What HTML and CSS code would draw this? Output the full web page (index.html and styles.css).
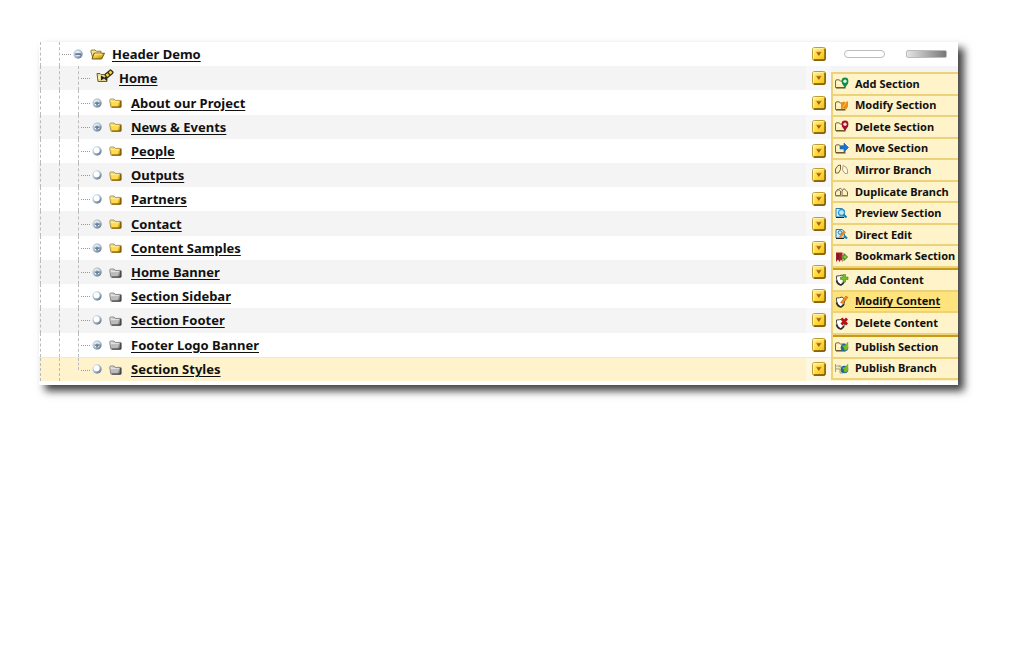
FILE: index.html
```html
<!DOCTYPE html>
<html lang="en">
<head>
<meta charset="utf-8">
<title>Site Structure</title>
<link rel="stylesheet" href="styles.css">
</head>
<body>
<svg class="defs" aria-hidden="true">
  <defs>
    <linearGradient id="gold" x1="0" y1="0" x2="1" y2="1"><stop offset="0" stop-color="#fff3a0"/><stop offset=".5" stop-color="#efc02a"/><stop offset="1" stop-color="#a97500"/></linearGradient>
    <linearGradient id="grey" x1="0" y1="0" x2="1" y2="1"><stop offset="0" stop-color="#eee"/><stop offset=".5" stop-color="#aaa"/><stop offset="1" stop-color="#555"/></linearGradient>
    <linearGradient id="button" x1="0" y1="0" x2="1" y2="1"><stop offset="0" stop-color="#fff6b0"/><stop offset=".5" stop-color="#ffdc3c"/><stop offset="1" stop-color="#eeb60c"/></linearGradient>
    <linearGradient id="ball" x1="0" y1="0" x2="1" y2="1"><stop offset="0" stop-color="#dde7ef"/><stop offset=".5" stop-color="#a9bccd"/><stop offset="1" stop-color="#4b6580"/></linearGradient>
    <symbol id="leaf" viewBox="0 0 10 10"><circle cx="5" cy="5" r="4.700" fill="url(#ball)"/><circle cx="4.600" cy="4.200" r="3" fill="#fff"/></symbol>
    <symbol id="plus" viewBox="0 0 10 10"><circle cx="5" cy="5" r="4.700" fill="url(#ball)"/><path d="M1.500 3.800Q5 0 8.500 3.800z" fill="#edf3f7"/><path d="M3 5.200h4M5 3.500v3.600" stroke="#5b748c" stroke-width="1"/><path d="M3 6.600h1M6.200 6.600h1" stroke="#fff" stroke-width="1"/></symbol>
    <symbol id="minus" viewBox="0 0 10 10"><circle cx="5" cy="5" r="4.700" fill="url(#ball)"/><path d="M1.500 3.800Q5 0 8.500 3.800z" fill="#edf3f7"/><path d="M2.300 5.100h5.400" stroke="#4c667f" stroke-width="1.200"/><path d="M3 6.700h4" stroke="#e8eef4" stroke-width="1"/></symbol>
    <symbol id="folder" viewBox="0 0 13 10"><path d="M.7 2.200Q.7 1 2 1h3l1.200 1.400h5.300q.8 0 .8.8v5.300q0 .9-.9.9H2.600Q1.800 9.400 1.700 8.600z" fill="url(#gold)" stroke="#9a8548" stroke-width=".8"/><path d="M2.500 4h7.500l-1 4.500h-6z" fill="#ffdb4d"/><path d="M2.200 3.600h8" stroke="#fff5b5" stroke-width=".8"/><path d="M11.600 3v6H3" fill="none" stroke="#7c5c0a" stroke-width="1"/></symbol>
    <symbol id="folder-grey" viewBox="0 0 13 10"><path d="M.7 2.200Q.7 1 2 1h3l1.200 1.400h5.300q.8 0 .8.8v5.300q0 .9-.9.9H2.600Q1.800 9.400 1.700 8.600z" fill="url(#grey)" stroke="#777" stroke-width=".8"/><path d="M2.500 4h7.500l-1 4.500h-6z" fill="#bbb"/><path d="M2.200 3.600h8" stroke="#eee" stroke-width=".8"/><path d="M11.600 3v6H3" fill="none" stroke="#444" stroke-width="1"/></symbol>
    <symbol id="folder-open" viewBox="0 0 15 11"><path d="M.8 2Q.8 1 2 1h3l1.300 1.200H11v2H5L3 9.800z" fill="#f6e48b" stroke="#84732f" stroke-width=".9"/><path d="M4 4.300h10.500L11.600 10H2z" fill="url(#gold)" stroke="#5e4a12" stroke-width=".9"/><path d="M4.800 5h7" stroke="#fff6a5"/></symbol>
    <symbol id="home-link" viewBox="0 0 18 14"><path d="M1 4.500h3l1 1h6v7H2z" fill="#e8d98e" stroke="#6d5e2c"/><path d="M5 6.500v5l3-2 3 2.500V7L8.500 8.500z" fill="#222"/><path d="M3 7v3" stroke="#fff6b5" stroke-width="1.500"/><rect x="9.500" y="4" width="4.500" height="4" rx="1" transform="rotate(-40 11.500 6)" fill="#f4d33c" stroke="#3b3315" stroke-width="1.300"/><rect x="12.500" y="1.500" width="4" height="4" rx="1" transform="rotate(45 14.500 3.500)" fill="#f4d33c" stroke="#3b3315" stroke-width="1.300"/></symbol>
    <symbol id="drop" viewBox="0 0 14 14"><rect x=".5" y=".5" width="13" height="13" rx="2" fill="url(#button)" stroke="#c09a35"/><path d="M2 13h10q1 0 1-1V2" fill="none" stroke="#74520a" stroke-width="1.300"/><path d="M1.500 11V1.500H11" fill="none" stroke="#fff3a8"/><path d="M3.500 4.500h6.500v1H3.500z" fill="#e8b63a"/><path d="M4.300 5.300h5L6.800 9z" fill="#a65c14"/></symbol>
    <symbol id="mini" viewBox="0 0 15 13"><path d="M1.500 10.500V4Q1.500 2.800 3 2.800h2L6.500 4H11v6.500z" fill="#fff0b5" stroke="#77683f"/><path d="M2 11h9.500" stroke="#594a26"/><path d="M3 6h6" stroke="#fffbe4" stroke-width="1.500"/></symbol>
    <symbol id="shield" viewBox="0 0 15 13"><path d="M2.500 3Q5.500 3 8 2l3 2.500q0 5-4 7.500-5-2-4.500-9z" fill="#fff" stroke="#4c493f" stroke-width="1"/><path d="M2.500 7.500q1 4 4.500 4.500 2-1.200 3-3" fill="none" stroke="#2d2b27" stroke-width="1.600"/></symbol>
  </defs>
</svg>
<main class="panel">
  <ul class="tree">
    <li class="row"><span class="guide"></span><span class="branch"></span><svg class="node"><use href="#minus"/></svg><svg class="folder open"><use href="#folder-open"/></svg><a class="name" href="#">Header Demo</a><span class="cell"><button class="drop" aria-label="Header Demo actions"><svg><use href="#drop"/></svg></button></span><span class="status"><span class="pill"></span><span class="pill shaded"></span></span></li>
    <li class="row"><span class="guide"></span><span class="guide"></span><span class="branch"></span><svg class="home"><use href="#home-link"/></svg><a class="name" href="#">Home</a><span class="cell"><button class="drop" aria-label="Home actions"><svg><use href="#drop"/></svg></button></span><span class="status"></span></li>
    <li class="row"><span class="guide"></span><span class="guide"></span><span class="branch"></span><svg class="node"><use href="#plus"/></svg><svg class="folder"><use href="#folder"/></svg><a class="name" href="#">About our Project</a><span class="cell"><button class="drop" aria-label="About our Project actions"><svg><use href="#drop"/></svg></button></span><span class="status"></span></li>
    <li class="row"><span class="guide"></span><span class="guide"></span><span class="branch"></span><svg class="node"><use href="#plus"/></svg><svg class="folder"><use href="#folder"/></svg><a class="name" href="#">News &amp; Events</a><span class="cell"><button class="drop" aria-label="News &amp; Events actions"><svg><use href="#drop"/></svg></button></span><span class="status"></span></li>
    <li class="row"><span class="guide"></span><span class="guide"></span><span class="branch"></span><svg class="node"><use href="#leaf"/></svg><svg class="folder"><use href="#folder"/></svg><a class="name" href="#">People</a><span class="cell"><button class="drop" aria-label="People actions"><svg><use href="#drop"/></svg></button></span><span class="status"></span></li>
    <li class="row"><span class="guide"></span><span class="guide"></span><span class="branch"></span><svg class="node"><use href="#leaf"/></svg><svg class="folder"><use href="#folder"/></svg><a class="name" href="#">Outputs</a><span class="cell"><button class="drop" aria-label="Outputs actions"><svg><use href="#drop"/></svg></button></span><span class="status"></span></li>
    <li class="row"><span class="guide"></span><span class="guide"></span><span class="branch"></span><svg class="node"><use href="#leaf"/></svg><svg class="folder"><use href="#folder"/></svg><a class="name" href="#">Partners</a><span class="cell"><button class="drop" aria-label="Partners actions"><svg><use href="#drop"/></svg></button></span><span class="status"></span></li>
    <li class="row"><span class="guide"></span><span class="guide"></span><span class="branch"></span><svg class="node"><use href="#plus"/></svg><svg class="folder"><use href="#folder"/></svg><a class="name" href="#">Contact</a><span class="cell"><button class="drop" aria-label="Contact actions"><svg><use href="#drop"/></svg></button></span><span class="status"></span></li>
    <li class="row"><span class="guide"></span><span class="guide"></span><span class="branch"></span><svg class="node"><use href="#plus"/></svg><svg class="folder"><use href="#folder"/></svg><a class="name" href="#">Content Samples</a><span class="cell"><button class="drop" aria-label="Content Samples actions"><svg><use href="#drop"/></svg></button></span><span class="status"></span></li>
    <li class="row"><span class="guide"></span><span class="guide"></span><span class="branch"></span><svg class="node"><use href="#plus"/></svg><svg class="folder"><use href="#folder-grey"/></svg><a class="name" href="#">Home Banner</a><span class="cell"><button class="drop" aria-label="Home Banner actions"><svg><use href="#drop"/></svg></button></span><span class="status"></span></li>
    <li class="row"><span class="guide"></span><span class="guide"></span><span class="branch"></span><svg class="node"><use href="#leaf"/></svg><svg class="folder"><use href="#folder-grey"/></svg><a class="name" href="#">Section Sidebar</a><span class="cell"><button class="drop" aria-label="Section Sidebar actions"><svg><use href="#drop"/></svg></button></span><span class="status"></span></li>
    <li class="row"><span class="guide"></span><span class="guide"></span><span class="branch"></span><svg class="node"><use href="#leaf"/></svg><svg class="folder"><use href="#folder-grey"/></svg><a class="name" href="#">Section Footer</a><span class="cell"><button class="drop" aria-label="Section Footer actions"><svg><use href="#drop"/></svg></button></span><span class="status"></span></li>
    <li class="row"><span class="guide"></span><span class="guide"></span><span class="branch"></span><svg class="node"><use href="#plus"/></svg><svg class="folder"><use href="#folder-grey"/></svg><a class="name" href="#">Footer Logo Banner</a><span class="cell"><button class="drop" aria-label="Footer Logo Banner actions"><svg><use href="#drop"/></svg></button></span><span class="status"></span></li>
    <li class="row selected"><span class="guide"></span><span class="guide"></span><span class="branch last"></span><svg class="node"><use href="#leaf"/></svg><svg class="folder"><use href="#folder-grey"/></svg><a class="name" href="#">Section Styles</a><span class="cell"><button class="drop" aria-label="Section Styles actions"><svg><use href="#drop"/></svg></button></span><span class="status"></span></li>
  </ul>
  <nav class="menu" aria-label="Section actions">
    <div class="group sections">
      <a class="item" href="#"><svg viewBox="0 0 15 13"><use href="#mini"/><path d="M11 11 8 6.500Q6.500.5 11 .5T14 6.500z" fill="#168a4a"/><circle cx="11" cy="4.300" r="1.700" fill="#d9f5df"/></svg>Add Section</a>
      <a class="item" href="#"><svg viewBox="0 0 15 13"><use href="#mini"/><path d="M7 10V4l3-1.500 1.500 1L14 2v5.500L12.500 10l-2-.5z" fill="#ee8e15"/><path d="M9 8l3-4" stroke="#ffc260"/></svg>Modify Section</a>
      <a class="item" href="#"><svg viewBox="0 0 15 13"><use href="#mini"/><path d="M11 11 8 6.500Q6.500.5 11 .5T14 6.500z" fill="#a80d25"/><circle cx="11" cy="4.300" r="1.700" fill="#f7d7d3"/></svg>Delete Section</a>
      <a class="item" href="#"><svg viewBox="0 0 15 13"><use href="#mini"/><path d="M6 4h4V1l4.500 4.500L10 10V7H6z" fill="#1671d1" stroke="#2d5a91" stroke-width=".6"/></svg>Move Section</a>
      <a class="item" href="#"><svg viewBox="0 0 15 13"><path d="M1.500 10V6L4 2.500 6.500 2v4.500L4.500 10z" fill="#fff0b8" stroke="#71643d"/><path d="M9 2.500 12 4l1.500 3v3.500H11L8.500 7z" fill="#fff9df" stroke="#aaa184"/></svg>Mirror Branch</a>
      <a class="item" href="#"><svg viewBox="0 0 15 13"><path d="M1.500 10.500V7L4 4l2.500 2v4.500zM8 10.500V6l2-2.500L13.500 7v3.500z" fill="#fff0b8" stroke="#6f6854"/><path d="M3 6.500 6 3l2.500 2M1.500 11h12.500" fill="none" stroke="#8b8267"/></svg>Duplicate Branch</a>
      <a class="item" href="#"><svg viewBox="0 0 15 13"><path d="M2 1.500h6l2.500 2V10H2z" fill="#d7eef8" stroke="#2e7fa8"/><path d="M2 10.500h8" stroke="#222"/><circle cx="7.500" cy="5.500" r="3" fill="#bbe8fa" stroke="#2e9bd0" stroke-width="1.300"/><path d="M9.500 7.500l3 3" stroke="#1680b0" stroke-width="2"/></svg>Preview Section</a>
      <a class="item" href="#"><svg viewBox="0 0 15 13"><path d="M2 1.500h6l2.500 2V10H2z" fill="#d7eef8" stroke="#2e7fa8"/><path d="M2 10.500h8" stroke="#222"/><path d="M5 8.500 9.500 2.500l2.500 2L7 9.500z" fill="#f18b14"/><circle cx="6" cy="4.500" r="1.800" fill="#c9edfa" stroke="#2b82a9"/><path d="M10 7.500l3 3" stroke="#1680b0" stroke-width="2"/></svg>Direct Edit</a>
      <a class="item" href="#"><svg viewBox="0 0 15 13"><path d="M2 2.500h6.500v9.500L7 9.500 5.500 12 4 9.500 2 12z" fill="#a31e2a"/><path d="M4 3.500v6" stroke="#6d0c18"/><path d="M7.500 6h2.500V3.500L13.500 7 10 10.500V8H7.500z" fill="#8acb3d" stroke="#37721c"/></svg>Bookmark Section</a>
    </div>
    <div class="group content">
      <a class="item" href="#"><svg viewBox="0 0 15 13"><use href="#shield"/><path d="M9 1.500h2.500V4H14v2.500h-2.500V9H9V6.500H6.500V4H9z" fill="#78bd21" stroke="#4a861a" stroke-width=".6"/></svg>Add Content</a>
      <a class="item active" href="#"><svg viewBox="0 0 15 13"><use href="#shield"/><path d="M6.500 7.500 12 1l2 1.500L8.500 8.500z" fill="#f18d20" stroke="#a95010" stroke-width=".5"/></svg>Modify Content</a>
      <a class="item" href="#"><svg viewBox="0 0 15 13"><use href="#shield"/><path d="M7.500 1.500 13 7.500M13 1.500 7.500 7.500" stroke="#ba1018" stroke-width="2.800"/></svg>Delete Content</a>
    </div>
    <div class="group publish">
      <a class="item" href="#"><svg viewBox="0 0 15 13"><use href="#mini"/><circle cx="10.500" cy="7.500" r="3.800" fill="#1c679b"/><path d="M8 5.500q2 2 2.500 5 4-.5 3.700-4V1.500L10.500 5.500z" fill="#79b922"/></svg>Publish Section</a>
      <a class="item" href="#"><svg viewBox="0 0 15 13"><path d="M1.500 2v8M2 4h4M2 7h4v4h3V5H6V3" fill="#eee3b7" stroke="#aaa078"/><circle cx="10.500" cy="7.500" r="3.800" fill="#1c679b"/><path d="M8 5.500q2 2 2.500 5 4-.5 3.700-4V1.500L10.500 5.500z" fill="#79b922"/></svg>Publish Branch</a>
    </div>
  </nav>
</main>
</body>
</html>
```
FILE: styles.css
```css
* { box-sizing: border-box; }
body { margin: 0; padding: 42px 66px 42px 39px; background: #fff; color: #111; font-family: "Noto Sans", sans-serif; font-weight: 700; }
svg { display: block; flex: none; }
.defs { position: absolute; width: 0; height: 0; }
.panel { position: relative; padding-bottom: 4px; background: #fff; box-shadow: 6px 6px 8px rgba(0, 0, 0, .75); }
.tree { display: grid; grid-auto-rows: 1fr; min-height: 339px; margin: 0; padding: 0; list-style: none; }
.row { display: flex; align-items: center; padding-left: 1px; background: #fff; }
.row:nth-child(even) { background: #f4f4f4; }
.row.selected { background: #fff3ce; border-top: 1px solid #ffe9a8; }
.guide { align-self: stretch; width: 19px; border-left: 1px dashed #bbb; }
.branch { position: relative; align-self: stretch; width: 14px; border-left: 1px dashed #bbb; }
.branch::after { content: ""; position: absolute; left: 2px; right: 2px; top: 50%; border-top: 1px dotted #999; }
.branch.last { align-self: flex-start; height: 12px; }
.branch.last::after { top: 100%; }
.node { width: 10px; height: 10px; }
.folder { width: 13px; height: 10px; margin: 1px 9px 0 7px; }
.folder.open { width: 15px; height: 11px; margin: 0 7px; }
.home { width: 18px; height: 14px; margin: 0 5px 4px 4px; }
.name { color: inherit; font-size: 13px; line-height: 20px; text-decoration: underline; text-underline-offset: 2px; }
.cell { display: flex; align-self: stretch; align-items: center; width: 25px; margin-left: auto; padding-left: 6px; background: rgba(255, 255, 255, .4); }
.drop { width: 14px; height: 14px; padding: 0; border: 0; background: none; cursor: pointer; }
.drop svg { width: 14px; height: 14px; }
.status { display: flex; gap: 21px; width: 127px; padding-left: 13px; }
.pill { width: 41px; height: 8px; border: 1px solid #bbb; border-radius: 4px; background: #fff; }
.pill.shaded { border-radius: 2px; background: linear-gradient(90deg, #e5e5e5, #777); }
.menu { position: absolute; top: 30px; right: 0; width: 127px; border: solid #ecd27a; border-width: 2px 0 0 2px; background: #fff3c9; }
.group { display: grid; grid-auto-rows: 1fr; }
.group + .group { border-top: 2px solid #c99a17; }
.sections { min-height: 194px; }
.content { min-height: 67px; }
.publish { min-height: 45px; }
.item { display: flex; align-items: center; gap: 6px; padding-left: 1px; border-bottom: 2px solid #ecd27a; color: inherit; font-size: 11px; line-height: 16px; white-space: nowrap; text-decoration: none; }
.item svg { width: 15px; height: 13px; }
.item.active { background: #ffe37c; text-decoration: underline; text-underline-offset: 2px; }
```
